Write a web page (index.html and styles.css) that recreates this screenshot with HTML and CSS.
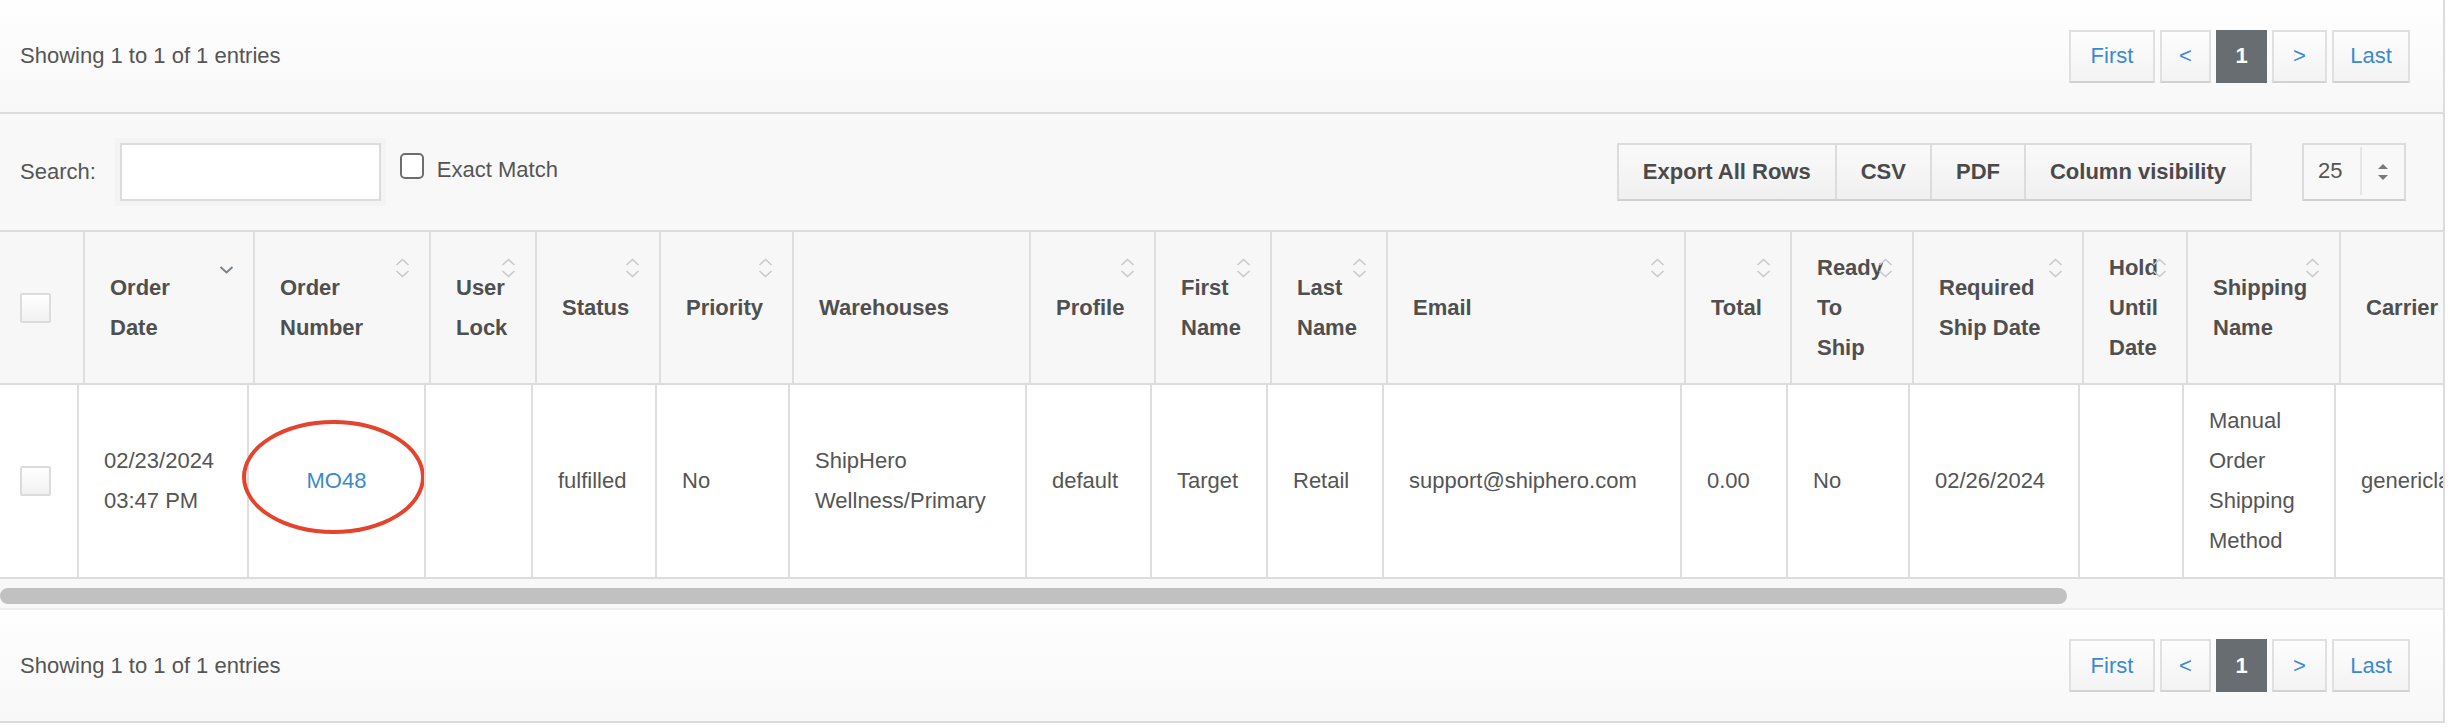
FILE: index.html
```html
<!DOCTYPE html>
<html>
<head>
<meta charset="utf-8">
<title>Orders</title>
<link rel="stylesheet" href="styles.css">
</head>
<body>
<div class="panel">
  <div class="bar bar-top">
    <div class="info">Showing 1 to 1 of 1 entries</div>
    <div class="pager">
      <a class="pg pg-first">First</a><a class="pg pg-prev">&lt;</a><span class="pg pg-num active">1</span><a class="pg pg-next">&gt;</a><a class="pg pg-last">Last</a>
    </div>
  </div>

  <div class="toolbar">
    <label class="search">Search:<input type="text" class="search-input"></label>
    <label class="exact"><span class="cb-round"></span>Exact Match</label>
    <div class="spacer"></div>
    <div class="btn-group">
      <button class="btn">Export All Rows</button><button class="btn">CSV</button><button class="btn">PDF</button><button class="btn">Column visibility</button>
    </div>
    <div class="length">
      <span class="len-val">25</span>
      <span class="len-arrows"><i class="tri-up"></i><i class="tri-down"></i></span>
    </div>
  </div>

  <div class="grid-wrap">
    <div class="head-row">
      <div class="th"><span class="cb"></span></div>
      <div class="th"><span>Order<br>Date</span><svg class="sort" width="15" height="20" viewBox="0 0 15 20"><polyline points="1.5,9 7.5,14.5 13.5,9" class="sorted"/></svg></div>
      <div class="th"><span>Order<br>Number</span><svg class="sort" width="15" height="20" viewBox="0 0 15 20"><polyline points="1.5,7 7.5,1.5 13.5,7"/><polyline points="1.5,13 7.5,18.5 13.5,13"/></svg></div>
      <div class="th"><span>User<br>Lock</span><svg class="sort" width="15" height="20" viewBox="0 0 15 20"><polyline points="1.5,7 7.5,1.5 13.5,7"/><polyline points="1.5,13 7.5,18.5 13.5,13"/></svg></div>
      <div class="th"><span>Status</span><svg class="sort" width="15" height="20" viewBox="0 0 15 20"><polyline points="1.5,7 7.5,1.5 13.5,7"/><polyline points="1.5,13 7.5,18.5 13.5,13"/></svg></div>
      <div class="th"><span>Priority</span><svg class="sort" width="15" height="20" viewBox="0 0 15 20"><polyline points="1.5,7 7.5,1.5 13.5,7"/><polyline points="1.5,13 7.5,18.5 13.5,13"/></svg></div>
      <div class="th"><span>Warehouses</span></div>
      <div class="th"><span>Profile</span><svg class="sort" width="15" height="20" viewBox="0 0 15 20"><polyline points="1.5,7 7.5,1.5 13.5,7"/><polyline points="1.5,13 7.5,18.5 13.5,13"/></svg></div>
      <div class="th"><span>First<br>Name</span><svg class="sort" width="15" height="20" viewBox="0 0 15 20"><polyline points="1.5,7 7.5,1.5 13.5,7"/><polyline points="1.5,13 7.5,18.5 13.5,13"/></svg></div>
      <div class="th"><span>Last<br>Name</span><svg class="sort" width="15" height="20" viewBox="0 0 15 20"><polyline points="1.5,7 7.5,1.5 13.5,7"/><polyline points="1.5,13 7.5,18.5 13.5,13"/></svg></div>
      <div class="th"><span>Email</span><svg class="sort" width="15" height="20" viewBox="0 0 15 20"><polyline points="1.5,7 7.5,1.5 13.5,7"/><polyline points="1.5,13 7.5,18.5 13.5,13"/></svg></div>
      <div class="th"><span>Total</span><svg class="sort" width="15" height="20" viewBox="0 0 15 20"><polyline points="1.5,7 7.5,1.5 13.5,7"/><polyline points="1.5,13 7.5,18.5 13.5,13"/></svg></div>
      <div class="th"><span>Ready<br>To<br>Ship</span><svg class="sort" width="15" height="20" viewBox="0 0 15 20"><polyline points="1.5,7 7.5,1.5 13.5,7"/><polyline points="1.5,13 7.5,18.5 13.5,13"/></svg></div>
      <div class="th"><span>Required<br>Ship Date</span><svg class="sort" width="15" height="20" viewBox="0 0 15 20"><polyline points="1.5,7 7.5,1.5 13.5,7"/><polyline points="1.5,13 7.5,18.5 13.5,13"/></svg></div>
      <div class="th"><span>Hold<br>Until<br>Date</span><svg class="sort" width="15" height="20" viewBox="0 0 15 20"><polyline points="1.5,7 7.5,1.5 13.5,7"/><polyline points="1.5,13 7.5,18.5 13.5,13"/></svg></div>
      <div class="th"><span>Shipping<br>Name</span><svg class="sort" width="15" height="20" viewBox="0 0 15 20"><polyline points="1.5,7 7.5,1.5 13.5,7"/><polyline points="1.5,13 7.5,18.5 13.5,13"/></svg></div>
      <div class="th"><span>Carrier</span></div>
    </div>

    <div class="body-row">
      <div class="td"><span class="cb"></span></div>
      <div class="td">02/23/2024<br>03:47 PM</div>
      <div class="td td-center"><a class="link">MO48</a><span class="ring"></span></div>
      <div class="td"></div>
      <div class="td">fulfilled</div>
      <div class="td">No</div>
      <div class="td">ShipHero<br>Wellness/Primary</div>
      <div class="td">default</div>
      <div class="td">Target</div>
      <div class="td">Retail</div>
      <div class="td">support@shiphero.com</div>
      <div class="td">0.00</div>
      <div class="td">No</div>
      <div class="td">02/26/2024</div>
      <div class="td"></div>
      <div class="td">Manual<br>Order<br>Shipping<br>Method</div>
      <div class="td">genericlabel</div>
    </div>

    <div class="hscroll"><div class="thumb"></div></div>
  </div>

  <div class="bar bar-bottom">
    <div class="info">Showing 1 to 1 of 1 entries</div>
    <div class="pager">
      <a class="pg pg-first">First</a><a class="pg pg-prev">&lt;</a><span class="pg pg-num active">1</span><a class="pg pg-next">&gt;</a><a class="pg pg-last">Last</a>
    </div>
  </div>
</div>
</body>
</html>
```

FILE: styles.css
```css
* { box-sizing: border-box; }

body {
  margin: 0;
  background: #fff;
  font-family: "Liberation Sans", Arial, Helvetica, sans-serif;
  font-size: 22px;
  color: #555;
}

.panel {
  width: 2445px;
  border-right: 2px solid #ddd;
}

/* info / pagination bars */
.bar {
  display: flex;
  align-items: center;
  justify-content: space-between;
  padding: 0 33px 0 20px;
  background: linear-gradient(#fefefe, #f8f8f8);
  border-bottom: 2px solid #dcdcdc;
}
.bar-top { height: 114px; }
.bar-bottom { height: 113px; }

.info { color: #555; }

.pager { display: flex; gap: 5px; }
.pg {
  height: 53px;
  display: flex;
  align-items: center;
  justify-content: center;
  color: #3a8bcd;
  background: linear-gradient(#fdfdfd, #f3f3f3);
  border: 2px solid #e0e0e0;
  border-bottom-color: #d2d2d2;
  text-decoration: none;
}
.pg-first { width: 86px; }
.pg-prev { width: 51px; }
.pg-num { width: 51px; }
.pg-next { width: 55px; }
.pg-last { width: 78px; }
.pg.active {
  background: #676d71;
  border-color: #676d71;
  color: #fff;
  font-weight: bold;
}

/* toolbar */
.toolbar {
  height: 116px;
  display: flex;
  align-items: center;
  padding: 0 37px 0 20px;
  background: #f8f8f8;
}
.search { display: flex; align-items: center; }
.search-input {
  margin-left: 24px;
  width: 261px;
  height: 58px;
  border: 2px solid #dcdcdc;
  background: #fff;
  outline: none;
  box-shadow: 0 0 0 5px #f4f4f4;
  font: inherit;
}
.exact { display: flex; align-items: center; margin-left: 19px; margin-top: -4px; }
.cb-round {
  width: 24px;
  height: 26px;
  border: 2px solid #6e6e6e;
  border-radius: 5px;
  background: #fff;
  margin-right: 13px;
  margin-top: -8px;
}
.spacer { flex: 1; }

.btn-group {
  display: flex;
  border: 2px solid #dcdcdc;
  border-bottom-color: #d0d0d0;
  height: 58px;
}
.btn {
  font: inherit;
  font-weight: bold;
  color: #4a4a4a;
  background: linear-gradient(#fafafa, #f0f0f0);
  border: none;
  border-left: 2px solid #dcdcdc;
  padding: 0 24px;
  height: 100%;
}
.btn:first-child { border-left: none; }

.length {
  margin-left: 50px;
  width: 104px;
  height: 58px;
  display: flex;
  align-items: stretch;
  border: 2px solid #dcdcdc;
  border-bottom-color: #d0d0d0;
  background: #f8f8f8;
}
.len-val {
  width: 58px;
  display: flex;
  align-items: center;
  padding-left: 14px;
  color: #555;
  border-right: 2px solid #e6e6e6;
  margin: 2px 0 4px;
}
.len-arrows {
  flex: 1;
  display: flex;
  flex-direction: column;
  align-items: center;
  justify-content: center;
  gap: 6px;
}
.tri-up, .tri-down { width: 0; height: 0; border-left: 5px solid transparent; border-right: 5px solid transparent; }
.tri-up { border-bottom: 5px solid #7a7a7a; }
.tri-down { border-top: 5px solid #7a7a7a; }

/* grid table */
.grid-wrap { overflow: hidden; }

.head-row, .body-row { display: grid; width: 2520px; }

.head-row {
  grid-template-columns: 83px 170px 176px 106px 124px 133px 237px 125px 116px 116px 298px 106px 122px 170px 104px 153px 160px;
  height: 155px;
  border-top: 2px solid #dcdcdc;
  border-bottom: 2px solid #dcdcdc;
  background: #f7f7f7;
}
.body-row {
  grid-template-columns: 77px 170px 177px 107px 124px 133px 237px 125px 116px 116px 298px 106px 122px 170px 104px 152px 160px;
  height: 194px;
  border-bottom: 2px solid #dcdcdc;
  background: #fff;
}

.th, .td {
  position: relative;
  display: flex;
  align-items: center;
  padding-left: 25px;
  line-height: 40px;
  white-space: nowrap;
  border-left: 2px solid #dedede;
}
.th:first-child, .td:first-child { border-left: none; padding-left: 20px; }

.th { font-weight: bold; color: #4f4f4f; }
.td { color: #555; }
.td-center { justify-content: center; padding-left: 0; }

.sort {
  position: absolute;
  top: 26px;
  right: 19px;
  fill: none;
  stroke: #c9c9c9;
  stroke-width: 1.6;
}
.sort .sorted { stroke: #7d8489; stroke-width: 2; }

.cb {
  width: 31px;
  height: 30px;
  border: 2px solid #dcdcdc;
  border-radius: 2px;
  background: linear-gradient(#fff, #f1f1f1);
}

.link { color: #3a8bcd; text-decoration: none; }

.ring {
  position: absolute;
  left: -7px;
  top: 35px;
  width: 183px;
  height: 114px;
  border: 4px solid #e5432c;
  border-radius: 50%;
}

.hscroll {
  height: 31px;
  padding-top: 9px;
  background: #f8f8f8;
  border-bottom: 2px solid #ececec;
}
.thumb {
  width: 2067px;
  height: 16px;
  border-radius: 8px;
  background: #c1c1c1;
}
```
